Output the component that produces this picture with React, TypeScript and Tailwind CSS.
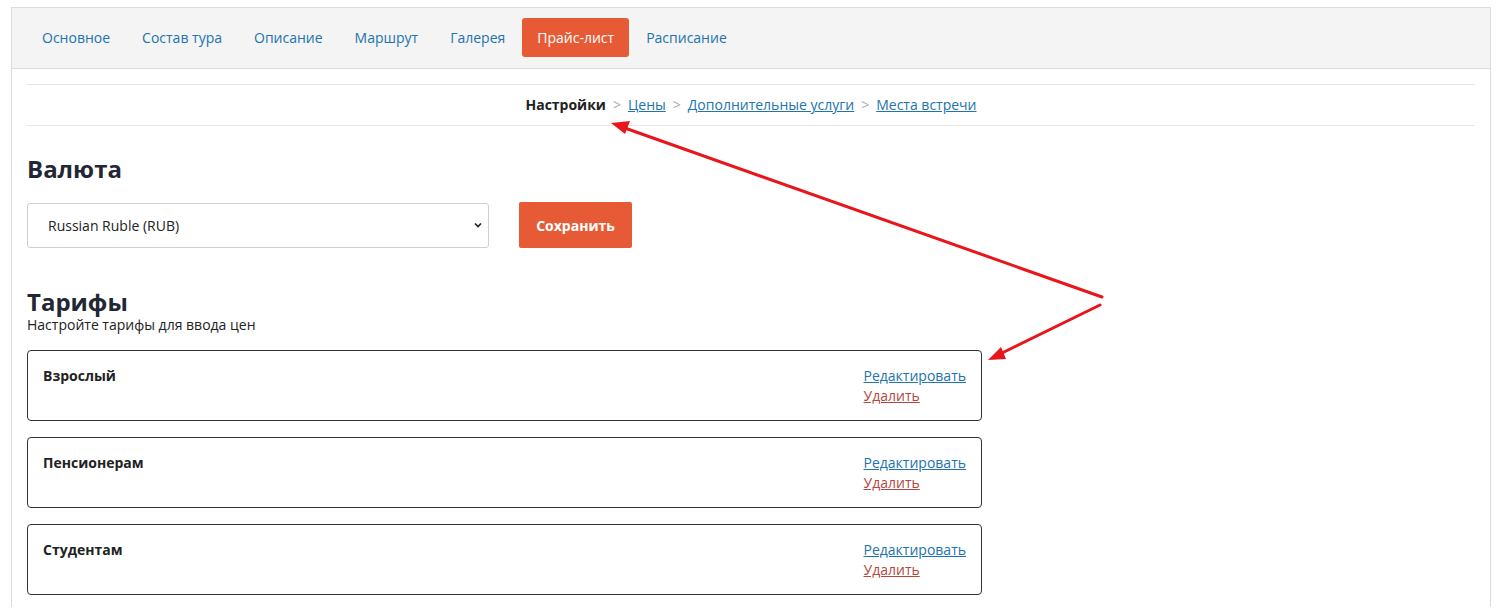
const tabs = ['Основное', 'Состав тура', 'Описание', 'Маршрут', 'Галерея', 'Прайс-лист', 'Расписание'];
const tariffs = ['Взрослый', 'Пенсионерам', 'Студентам'];

export default function App() {
  return (
    <div className="relative min-h-[608px] bg-white text-[#212529]" style={{ fontFamily: '"Open Sans", sans-serif' }}>
      <div className="ml-[11px] mt-[7px] w-[1480px] border-x border-t border-[#dcdcdc]">
        <div className="flex h-[61px] items-center gap-[2px] border-b border-[#dcdcdc] bg-[#f4f4f4] px-[15px] pb-[1px]">
          {tabs.map((t) => (
            <span
              key={t}
              className={
                t === 'Прайс-лист'
                  ? 'rounded-[3px] bg-[#e65b35] px-[15px] py-[9px] text-[14px] leading-[21px] text-white'
                  : 'px-[15px] py-[9px] text-[14px] leading-[21px] text-[#2173ad]'
              }
            >
              {t}
            </span>
          ))}
        </div>

        <div className="px-[15px] pt-[15px]">
          <div className="flex h-[42px] items-center justify-center gap-[7px] border-y border-[#e6e6e6] pb-[1px] text-[14px]">
            <span className="font-bold text-[#222]">Настройки</span>
            <span className="text-[#aaa]">&gt;</span>
            <a className="text-[#2173ad] underline">Цены</a>
            <span className="text-[#aaa]">&gt;</span>
            <a className="text-[#2173ad] underline">Дополнительные услуги</a>
            <span className="text-[#aaa]">&gt;</span>
            <a className="text-[#2173ad] underline">Места встречи</a>
          </div>

          <h2 className="mt-[27px] text-[24px] font-bold leading-[32px] text-[#222733]">Валюта</h2>
          <div className="mt-[17px] flex items-center gap-[30px]">
            <div className="flex h-[45px] w-[462px] items-center justify-between rounded-[3px] border border-[#cfcfcf] pl-[20px] pr-[4px] text-[14px] text-[#222]">
              <span>Russian Ruble (RUB)</span>
              <svg width="12" height="12" viewBox="0 0 12 12" fill="none" stroke="#222" strokeWidth="1.7">
                <path d="M3 4.5 6 7.5 9 4.5" />
              </svg>
            </div>
            <button className="h-[46px] w-[113px] rounded-[2px] bg-[#e65b35] text-[14px] font-bold text-white">Сохранить</button>
          </div>

          <h2 className="mt-[40px] text-[24px] font-bold leading-[27px] text-[#222733]">Тарифы</h2>
          <p className="text-[14px] leading-[20px] text-[#222]">Настройте тарифы для ввода цен</p>

          <div className="mt-[15px] flex w-[955px] flex-col gap-[16px] pb-[12px]">
            {tariffs.map((t) => (
              <div key={t} className="flex h-[71px] justify-between rounded-[4px] border border-[#333] px-[15px] pt-[15px]">
                <span className="text-[14px] font-bold leading-[20px] text-[#222]">{t}</span>
                <div className="flex flex-col text-[14px] leading-[20px]">
                  <a className="text-[#2173ad] underline">Редактировать</a>
                  <a className="text-[#b5473c] underline">Удалить</a>
                </div>
              </div>
            ))}
          </div>
        </div>
      </div>

      <svg className="pointer-events-none absolute left-0 top-0" width="1504" height="608">
        <g stroke="#e8151b" strokeWidth="3" strokeLinecap="round" fill="none">
          <path d="M1102 290 L622 120" />
          <path d="M1100 298 L998 348" />
        </g>
        <g fill="#e8151b">
          <path d="M611 116 L630 114 L625 127 Z" />
          <path d="M988 353 L1001 340 L1006 352 Z" />
        </g>
      </svg>
    </div>
  );
}
